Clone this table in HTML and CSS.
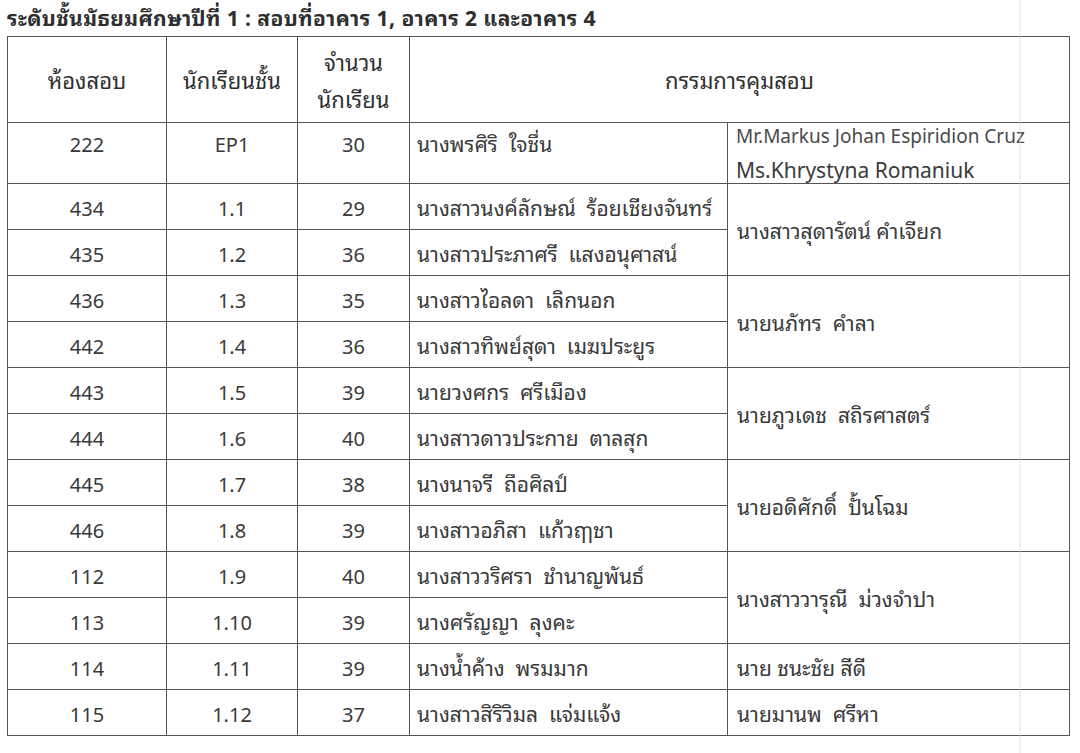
FILE: index.html
```html
<!DOCTYPE html>
<html lang="th">
<head>
<meta charset="utf-8">
<title>ระดับชั้นมัธยมศึกษาปีที่ 1</title>
<link rel="stylesheet" href="styles.css">
</head>
<body>
<div class="page">
  <h1 class="title">ระดับชั้นมัธยมศึกษาปีที่ 1 : สอบที่อาคาร 1, อาคาร 2 และอาคาร 4</h1>
  <table class="exam">
    <colgroup>
      <col class="c-room"><col class="c-class"><col class="c-count"><col class="c-teacher"><col class="c-proctor">
    </colgroup>
    <thead>
      <tr class="head">
        <th>ห้องสอบ</th>
        <th>นักเรียนชั้น</th>
        <th>จำนวน<br>นักเรียน</th>
        <th colspan="2">กรรมการคุมสอบ</th>
      </tr>
    </thead>
    <tbody>
      <tr class="first">
        <td class="num">222</td><td class="num">EP1</td><td class="num">30</td>
        <td class="name">นางพรศิริ&nbsp; ใจชื่น</td>
        <td class="proctor en"><div class="en1">Mr.Markus Johan Espiridion Cruz</div><div class="en2">Ms.Khrystyna Romaniuk</div></td>
      </tr>
      <tr>
        <td class="num">434</td><td class="num">1.1</td><td class="num">29</td>
        <td class="name">นางสาวนงค์ลักษณ์&nbsp; ร้อยเชียงจันทร์</td>
        <td class="proctor" rowspan="2">นางสาวสุดารัตน์ คำเจียก</td>
      </tr>
      <tr>
        <td class="num">435</td><td class="num">1.2</td><td class="num">36</td>
        <td class="name">นางสาวประภาศรี&nbsp; แสงอนุศาสน์</td>
      </tr>
      <tr>
        <td class="num">436</td><td class="num">1.3</td><td class="num">35</td>
        <td class="name">นางสาวไอลดา&nbsp; เลิกนอก</td>
        <td class="proctor" rowspan="2">นายนภัทร&nbsp; คำลา</td>
      </tr>
      <tr>
        <td class="num">442</td><td class="num">1.4</td><td class="num">36</td>
        <td class="name">นางสาวทิพย์สุดา&nbsp; เมฆประยูร</td>
      </tr>
      <tr>
        <td class="num">443</td><td class="num">1.5</td><td class="num">39</td>
        <td class="name">นายวงศกร&nbsp; ศรีเมือง</td>
        <td class="proctor" rowspan="2">นายภูวเดช&nbsp; สถิรศาสตร์</td>
      </tr>
      <tr>
        <td class="num">444</td><td class="num">1.6</td><td class="num">40</td>
        <td class="name">นางสาวดาวประกาย&nbsp; ตาลสุก</td>
      </tr>
      <tr>
        <td class="num">445</td><td class="num">1.7</td><td class="num">38</td>
        <td class="name">นางนาจรี&nbsp; ถือศิลป์</td>
        <td class="proctor" rowspan="2">นายอดิศักดิ์&nbsp; ปั้นโฉม</td>
      </tr>
      <tr>
        <td class="num">446</td><td class="num">1.8</td><td class="num">39</td>
        <td class="name">นางสาวอภิสา&nbsp; แก้วฤๅชา</td>
      </tr>
      <tr>
        <td class="num">112</td><td class="num">1.9</td><td class="num">40</td>
        <td class="name">นางสาววริศรา&nbsp; ชำนาญพันธ์</td>
        <td class="proctor" rowspan="2">นางสาววารุณี&nbsp; ม่วงจำปา</td>
      </tr>
      <tr>
        <td class="num">113</td><td class="num">1.10</td><td class="num">39</td>
        <td class="name">นางศรัญญา&nbsp; ลุงคะ</td>
      </tr>
      <tr>
        <td class="num">114</td><td class="num">1.11</td><td class="num">39</td>
        <td class="name">นางน้ำค้าง&nbsp; พรมมาก</td>
        <td class="proctor">นาย ชนะชัย สีดี</td>
      </tr>
      <tr>
        <td class="num">115</td><td class="num">1.12</td><td class="num">37</td>
        <td class="name">นางสาวสิริวิมล&nbsp; แจ่มแจ้ง</td>
        <td class="proctor">นายมานพ&nbsp; ศรีหา</td>
      </tr>
    </tbody>
  </table>
  <div class="scan-line"></div>
</div>
</body>
</html>
```

FILE: styles.css
```css
html, body {
  margin: 0;
  padding: 0;
  background: #ffffff;
}

body {
  font-family: "Noto Sans Thai Looped", "Noto Serif Thai", "Loma", "Garuda", "Sarabun", "Tahoma", "Noto Sans Thai", "Noto Sans", "DejaVu Sans", sans-serif;
  color: #3a3a3a;
}

.page {
  position: relative;
  width: 1080px;
  height: 753px;
  padding: 0 0 0 7px;
  box-sizing: border-box;
  overflow: hidden;
}

.title {
  margin: 0 0 6px 0;
  padding-top: 4px;
  font-size: 21px;
  line-height: 26px;
  font-weight: 700;
  letter-spacing: 0.4px;
  color: #2e2e2e;
  white-space: nowrap;
}

.exam {
  border-collapse: collapse;
  table-layout: fixed;
  width: 1062px;
}

.c-room { width: 159px; }
.c-class { width: 131px; }
.c-count { width: 112px; }
.c-teacher { width: 318px; }
.c-proctor { width: 342px; }

.exam th,
.exam td {
  border: 1px solid #555555;
  padding: 0;
  font-size: 21px;
  line-height: 28px;
  height: 45px;
  vertical-align: middle;
  white-space: nowrap;
}

.exam th {
  font-weight: 400;
  font-size: 22px;
  line-height: 37px;
  height: 85px;
  text-align: center;
  color: #2f2f2f;
}

.exam td.num {
  text-align: center;
  font-size: 20px;
}

.exam td.name {
  text-align: left;
  padding-left: 7px;
}

.exam td.proctor {
  text-align: left;
  padding-left: 9px;
}

.exam .first td {
  height: 60px;
  vertical-align: top;
  line-height: 40px;
}

.exam .first td.en {
  line-height: normal;
  vertical-align: top;
  font-family: "Noto Sans", "Open Sans", sans-serif;
  padding-left: 8px;
}

.en1 {
  font-size: 19px;
  line-height: 26px;
  color: #4a4a4a;
}

.en2 {
  margin-top: 8px;
  font-size: 21px;
  line-height: 26px;
}

.scan-line {
  position: absolute;
  top: 0;
  left: 1019px;
  width: 2px;
  height: 753px;
  background: rgba(225, 215, 190, 0.35);
}
```
